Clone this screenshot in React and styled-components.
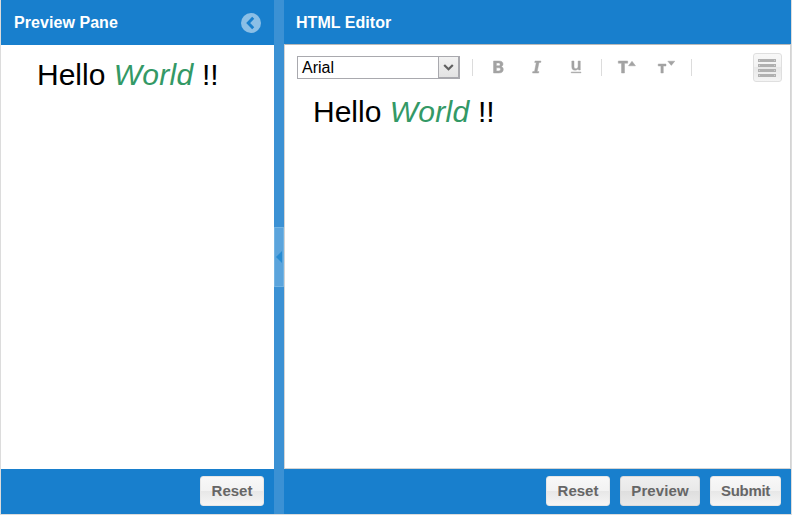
import React from 'react';
import styled, { createGlobalStyle } from 'styled-components';

const GlobalStyle = createGlobalStyle`
  * { box-sizing: border-box; }
  body { margin: 0; background: #fff; font-family: "Liberation Sans", Arial, sans-serif; }
`;

const Frame = styled.div`
  display: flex;
  width: 792px;
  height: 515px;
  border: solid #dcdcdc;
  border-width: 0 1px 1px;
  overflow: hidden;
`;

const Pane = styled.section`
  display: flex;
  flex-direction: column;
  width: ${({ $width }) => $width}px;
`;

const Header = styled.header`
  display: flex;
  flex: none;
  align-items: flex-start;
  justify-content: space-between;
  height: ${({ $height }) => $height}px;
  padding: 13px 13px 0 ${({ $inset }) => $inset}px;
  background: #187fcd;
`;

const Title = styled.h2`
  margin: 0;
  height: 20px;
  color: #fff;
  font-size: 16px;
  line-height: 20px;
  font-weight: bold;
  letter-spacing: ${({ $spacing }) => $spacing}px;
`;

const CollapseButton = styled.button`
  display: flex;
  width: 20px;
  height: 20px;
  padding: 0;
  border: 0;
  background: none;
`;

const PreviewBody = styled.div`
  flex: 1;
  padding: 12px 0 0 36px;
  background: #fff;
`;

const EditorBody = styled.div`
  flex: 1;
  border: 1px solid #d4d4d4;
  border-top-color: #b9b9b9;
  background: #fff;
`;

const Greeting = styled.p`
  margin: 0;
  color: #000;
  font-size: 30px;
  line-height: 36px;
  white-space: pre;

  em { color: #339966; letter-spacing: 0.3px; }
`;

const EditArea = styled.div`
  padding: 4px 0 0 28px;
`;

const Splitter = styled.div`
  display: flex;
  align-items: center;
  width: 10px;
  background: #3b91d4;
`;

const SplitHandle = styled.button`
  display: flex;
  align-items: center;
  justify-content: center;
  width: 10px;
  height: 60px;
  padding: 0;
  border: 1px solid #73b4e3;
  background: #5ba4dc;
`;

const Footer = styled.footer`
  display: flex;
  flex: none;
  align-items: flex-start;
  justify-content: flex-end;
  gap: 10px;
  height: 45px;
  padding: 7px 10px 0 0;
  background: #187fcd;
`;

const Button = styled.button`
  width: ${({ $width }) => $width}px;
  height: 30px;
  padding: 0;
  border: 1px solid ${({ $pressed }) => ($pressed ? '#dadada' : '#e6e6e6')};
  border-radius: 3px;
  background: ${({ $pressed }) => ($pressed
    ? 'linear-gradient(#efefef 0, #e8e8e8 50%, #dedede 50%, #e9e9e9 100%)'
    : 'linear-gradient(#f8f8f8 0, #f2f2f2 50%, #e7e7e7 50%, #f5f5f5 100%)')};
  color: #666;
  font: bold 15px/28px "Liberation Sans", Arial, sans-serif;
  letter-spacing: ${({ $spacing = 0 }) => $spacing}px;
`;

const Toolbar = styled.div`
  display: flex;
  align-items: center;
  height: 45px;
  padding: 0 8px 0 12px;
`;

const FontSelect = styled.div`
  display: flex;
  width: 163px;
  height: 23px;
  border: 1px solid #a9a9ae;
  background: #fff;
`;

const FontName = styled.span`
  flex: 1;
  padding-left: 4px;
  color: #000;
  font-size: 16px;
  line-height: 21px;
`;

const DropButton = styled.span`
  display: flex;
  align-items: center;
  justify-content: center;
  width: 21px;
  height: 21px;
  border: 1px solid #a9a9ae;
  border-width: 0 1px 1px 1px;
  background: linear-gradient(#f2f2f2, #e3e3e3);
`;

const Divider = styled.span`
  width: 1px;
  height: 17px;
  margin-left: ${({ $before }) => $before}px;
  background: #dcdcdc;
`;

const Tool = styled.button`
  display: flex;
  width: 20px;
  height: 21px;
  margin-left: ${({ $before }) => $before}px;
  padding: 0;
  border: 0;
  background: none;
`;

const ListButton = styled.button`
  display: flex;
  align-items: center;
  width: 29px;
  height: 29px;
  margin-left: auto;
  padding: 0 0 0 4px;
  border: 1px solid #dfdfdf;
  border-radius: 3px;
  background: linear-gradient(#f8f8f8 0, #f2f2f2 50%, #e8e8e8 50%, #f4f4f4 100%);
`;

const ToolIcon = ({ children }) => (
  <svg width="20" height="20" viewBox="0 0 20 20" fill="#a3a3a3" stroke="#a3a3a3" strokeWidth="0.45">{children}</svg>
);

const HelloWorld = () => <Greeting>Hello <em>World</em> !!</Greeting>;

export default function App() {
  return (
    <>
      <GlobalStyle />
      <Frame>
        <Pane $width={273}>
          <Header $height={45} $inset={13}>
            <Title $spacing={0.06}>Preview Pane</Title>
            <CollapseButton aria-label="Collapse preview">
              <svg width="20" height="20" viewBox="0 0 20 20">
                <circle cx="10" cy="10" r="10" fill="#8bbfe6" />
                <path d="M12.2 4.8 7.2 10l5 5.2" fill="none" stroke="#187fcd" strokeWidth="2.9" />
              </svg>
            </CollapseButton>
          </Header>
          <PreviewBody><HelloWorld /></PreviewBody>
          <Footer><Button $width={64}>Reset</Button></Footer>
        </Pane>
        <Splitter>
          <SplitHandle aria-label="Resize panes">
            <svg width="6" height="12" viewBox="0 0 6 12"><path d="M6 0v12L0 6z" fill="#278bd2" /></svg>
          </SplitHandle>
        </Splitter>
        <Pane $width={507}>
          <Header $height={44} $inset={12}><Title $spacing={0.04}>HTML Editor</Title></Header>
          <EditorBody>
            <Toolbar>
              <FontSelect>
                <FontName>Arial</FontName>
                <DropButton>
                  <svg width="11" height="9" viewBox="0 0 11 9">
                    <path d="M1.2 2 5.5 6.3 9.8 2" fill="none" stroke="#606060" strokeWidth="2.2" />
                  </svg>
                </DropButton>
              </FontSelect>
              <Divider $before={12} />
              <Tool $before={15} aria-label="Bold">
                <ToolIcon>
                  <path fillRule="evenodd" d="M5.5 4h5.4c2.7 0 4.1 1 4.1 3 0 1.5-.8 2.3-2 2.6 1.5.3 2.3 1.2 2.3 2.8 0 2.3-1.7 3.6-4.4 3.6H5.5zm2.9 2v2.7h2.1c1.1 0 1.6-.5 1.6-1.3S11.6 6 10.5 6zm0 4.8v3.1h2.3c1.2 0 1.8-.6 1.8-1.6s-.6-1.5-1.8-1.5z" />
                </ToolIcon>
              </Tool>
              <Tool $before={19} aria-label="Italic">
                <ToolIcon><path d="M8 4h6l-.3 1.5H12l-1.8 9h1.7L11.6 16H5.5l.3-1.5h1.7l1.8-9H7.7z" /></ToolIcon>
              </Tool>
              <Tool $before={19} aria-label="Underline">
                <ToolIcon>
                  <path d="M5.8 4H8v5.5c0 1.5.6 2.2 1.9 2.2 1.5 0 2.2-.9 2.2-2.7V4h2.2v9h-1.8l-.3-1.2c-.6.9-1.6 1.4-3 1.4-2.3 0-3.4-1.100-3.400-3.500zM5.200 15H15v.8H5.200z" />
                </ToolIcon>
              </Tool>
              <Divider $before={15} />
              <Tool $before={15} aria-label="Increase text size">
                <ToolIcon><path d="M1.3 4h9.4v2.2H7.5V16h-3V6.200H1.300zM15 4.200l3.500 4.600h-7z" /></ToolIcon>
              </Tool>
              <Tool $before={19} aria-label="Decrease text size">
                <ToolIcon><path d="M2.2 7H10v2H7.3v7H4.900V9H2.200zm9.600-2.800h7L15.300 8.400z" /></ToolIcon>
              </Tool>
              <Divider $before={15} />
              <ListButton aria-label="Show source">
                <svg width="18" height="18" viewBox="0 0 18 18">
                  {[0, 5, 10, 15].map((y) => (
                    <g key={y}>
                      <rect y={y} width="18" height="3" fill="#b0b0b0" />
                      <path d={`M1 ${y + 1}h1v1h-1zM16 ${y + 1}h1v1h-1z`} fill="#d0d0d0" />
                    </g>
                  ))}
                </svg>
              </ListButton>
            </Toolbar>
            <EditArea><HelloWorld /></EditArea>
          </EditorBody>
          <Footer>
            <Button $width={64}>Reset</Button>
            <Button $width={80} $spacing={0.1} $pressed>Preview</Button>
            <Button $width={71} $spacing={-0.3}>Submit</Button>
          </Footer>
        </Pane>
      </Frame>
    </>
  );
}
